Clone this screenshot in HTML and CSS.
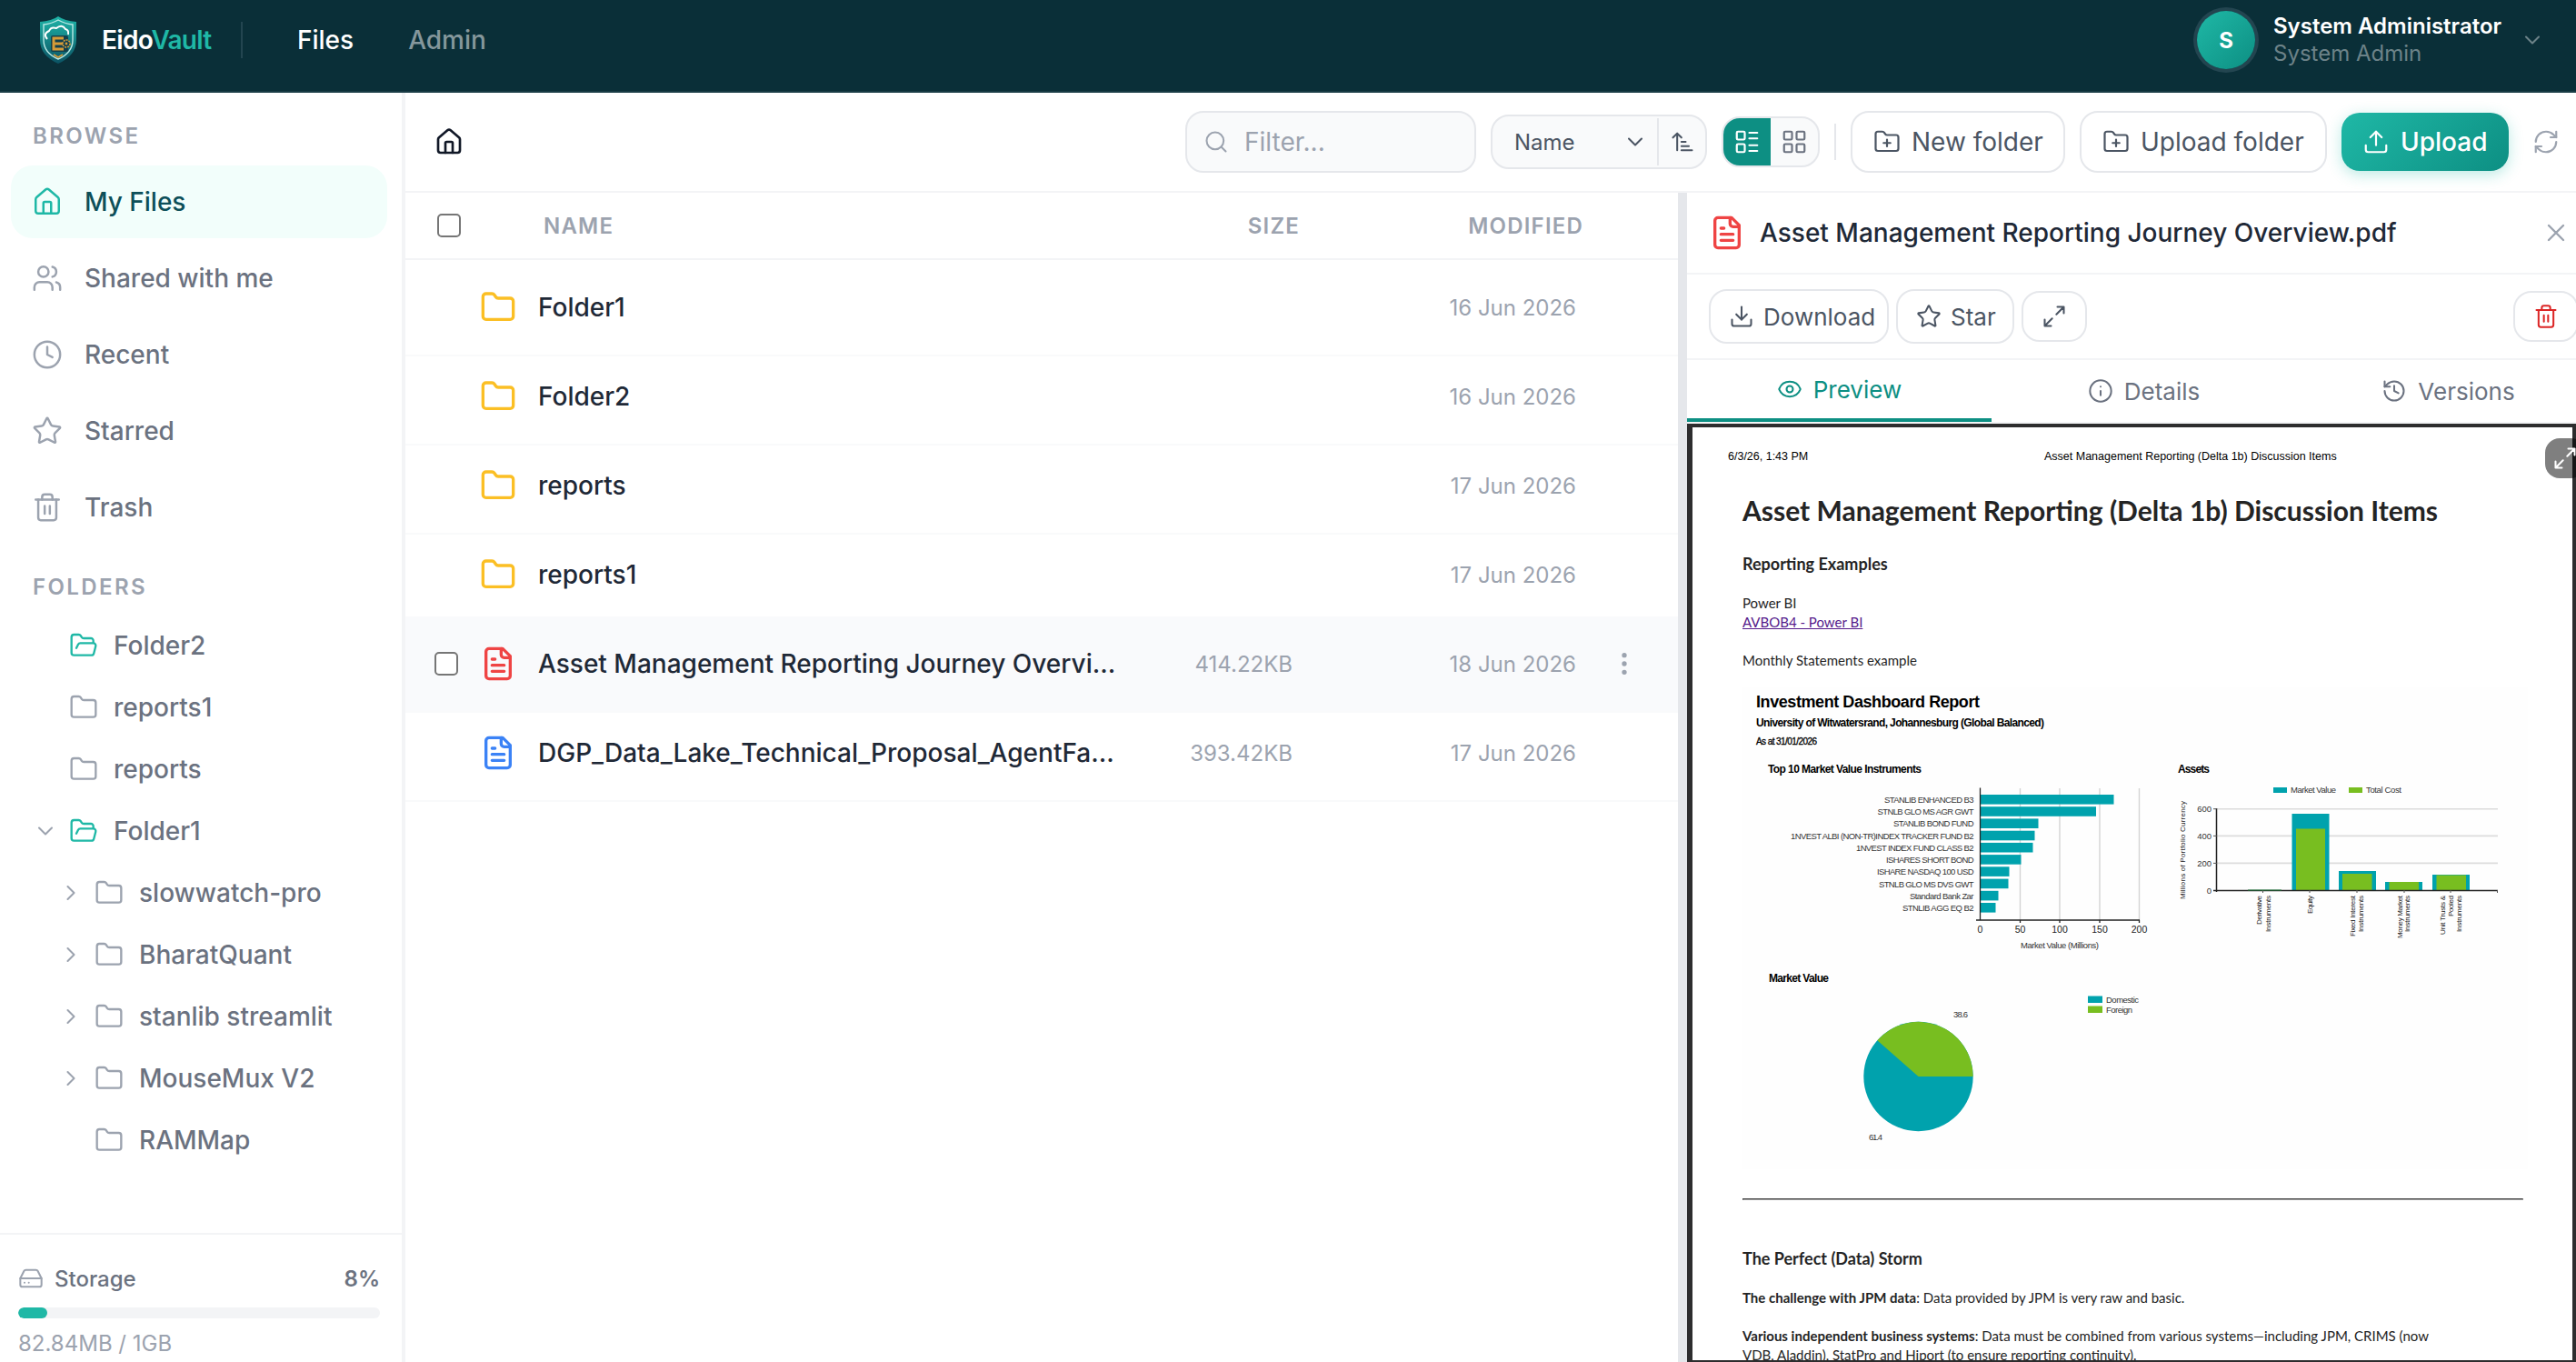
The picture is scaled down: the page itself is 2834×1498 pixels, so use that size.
FILE: index.html
```
<!DOCTYPE html>
<html lang="en">
  <head>
    <meta charset="UTF-8" />
    <title>EidoVault</title>
    <link rel="stylesheet" href="styles.css">
  </head>

  <body>
    <!-- icon set -->
    <svg width="0" height="0" class="sprite">
      <symbol id="i-home" viewBox="0 0 24 24"><path d="M15 21v-8a1 1 0 0 0-1-1h-4a1 1 0 0 0-1 1v8"/><path d="M3 10a2 2 0 0 1 .709-1.528l7-5.999a2 2 0 0 1 2.582 0l7 5.999A2 2 0 0 1 21 10v9a2 2 0 0 1-2 2H5a2 2 0 0 1-2-2z"/></symbol>
      <symbol id="i-users" viewBox="0 0 24 24"><path d="M16 21v-2a4 4 0 0 0-4-4H6a4 4 0 0 0-4 4v2"/><circle cx="9" cy="7" r="4"/><path d="M22 21v-2a4 4 0 0 0-3-3.87"/><path d="M16 3.13a4 4 0 0 1 0 7.75"/></symbol>
      <symbol id="i-clock" viewBox="0 0 24 24"><circle cx="12" cy="12" r="10"/><path d="M12 6v6l4 2"/></symbol>
      <symbol id="i-star" viewBox="0 0 24 24"><path d="M11.525 2.295a.53.53 0 0 1 .95 0l2.31 4.679a2.123 2.123 0 0 0 1.595 1.16l5.166.756a.53.53 0 0 1 .294.904l-3.736 3.638a2.123 2.123 0 0 0-.611 1.878l.882 5.14a.53.53 0 0 1-.771.56l-4.618-2.428a2.122 2.122 0 0 0-1.973 0L6.396 21.01a.53.53 0 0 1-.77-.56l.881-5.139a2.122 2.122 0 0 0-.611-1.879L2.16 9.795a.53.53 0 0 1 .294-.906l5.165-.755a2.122 2.122 0 0 0 1.597-1.16z"/></symbol>
      <symbol id="i-trash" viewBox="0 0 24 24"><path d="M3 6h18"/><path d="M19 6v14a2 2 0 0 1-2 2H7a2 2 0 0 1-2-2V6"/><path d="M8 6V4a2 2 0 0 1 2-2h4a2 2 0 0 1 2 2v2"/><path d="M10 11v6M14 11v6"/></symbol>
      <symbol id="i-folder" viewBox="0 0 24 24"><path d="M20 20a2 2 0 0 0 2-2V8a2 2 0 0 0-2-2h-7.9a2 2 0 0 1-1.69-.9L9.6 3.9A2 2 0 0 0 7.93 3H4a2 2 0 0 0-2 2v13a2 2 0 0 0 2 2Z"/></symbol>
      <symbol id="i-folder-open" viewBox="0 0 24 24"><path d="m6 14 1.5-2.9A2 2 0 0 1 9.24 10H20a2 2 0 0 1 1.94 2.5l-1.54 6a2 2 0 0 1-1.95 1.5H4a2 2 0 0 1-2-2V5a2 2 0 0 1 2-2h3.9a2 2 0 0 1 1.69.9l.81 1.2a2 2 0 0 0 1.67.9H18a2 2 0 0 1 2 2v2"/></symbol>
      <symbol id="i-folder-plus" viewBox="0 0 24 24"><path d="M12 10v6M9 13h6"/><path d="M20 20a2 2 0 0 0 2-2V8a2 2 0 0 0-2-2h-7.9a2 2 0 0 1-1.69-.9L9.6 3.9A2 2 0 0 0 7.93 3H4a2 2 0 0 0-2 2v13a2 2 0 0 0 2 2Z"/></symbol>
      <symbol id="i-down" viewBox="0 0 24 24"><path d="m6 9 6 6 6-6"/></symbol>
      <symbol id="i-right" viewBox="0 0 24 24"><path d="m9 18 6-6-6-6"/></symbol>
      <symbol id="i-drive" viewBox="0 0 24 24"><path d="M22 12H2"/><path d="M5.45 5.11 2 12v6a2 2 0 0 0 2 2h16a2 2 0 0 0 2-2v-6l-3.45-6.89A2 2 0 0 0 16.76 4H7.24a2 2 0 0 0-1.79 1.11z"/><path d="M6 16h.01M10 16h.01"/></symbol>
      <symbol id="i-search" viewBox="0 0 24 24"><circle cx="11" cy="11" r="8"/><path d="m21 21-4.3-4.3"/></symbol>
      <symbol id="i-sort" viewBox="0 0 24 24"><path d="m3 8 4-4 4 4M7 4v16"/><path d="M11 12h4M11 16h7M11 20h10"/></symbol>
      <symbol id="i-list" viewBox="0 0 24 24"><rect x="3" y="3" width="7" height="7" rx="1"/><rect x="3" y="14" width="7" height="7" rx="1"/><path d="M14 4h7M14 9h7M14 15h7M14 20h7"/></symbol>
      <symbol id="i-grid" viewBox="0 0 24 24"><rect x="3" y="3" width="7" height="7" rx="1"/><rect x="14" y="3" width="7" height="7" rx="1"/><rect x="14" y="14" width="7" height="7" rx="1"/><rect x="3" y="14" width="7" height="7" rx="1"/></symbol>
      <symbol id="i-upload" viewBox="0 0 24 24"><path d="M21 15v4a2 2 0 0 1-2 2H5a2 2 0 0 1-2-2v-4"/><path d="m17 8-5-5-5 5"/><path d="M12 3v12"/></symbol>
      <symbol id="i-download" viewBox="0 0 24 24"><path d="M21 15v4a2 2 0 0 1-2 2H5a2 2 0 0 1-2-2v-4"/><path d="m7 10 5 5 5-5"/><path d="M12 15V3"/></symbol>
      <symbol id="i-refresh" viewBox="0 0 24 24"><path d="M3 12a9 9 0 0 1 9-9 9.75 9.75 0 0 1 6.74 2.74L21 8"/><path d="M21 3v5h-5"/><path d="M21 12a9 9 0 0 1-9 9 9.75 9.75 0 0 1-6.74-2.74L3 16"/><path d="M8 16H3v5"/></symbol>
      <symbol id="i-file" viewBox="0 0 24 24"><path d="M15 2H6a2 2 0 0 0-2 2v16a2 2 0 0 0 2 2h12a2 2 0 0 0 2-2V7Z"/><path d="M14 2v4a2 2 0 0 0 2 2h4"/><path d="M10 9H8M16 13H8M16 17H8"/></symbol>
      <symbol id="i-close" viewBox="0 0 24 24"><path d="M18 6 6 18M6 6l12 12"/></symbol>
      <symbol id="i-expand" viewBox="0 0 24 24"><path d="M15 3h6v6M9 21H3v-6M21 3l-7 7M3 21l7-7"/></symbol>
      <symbol id="i-eye" viewBox="0 0 24 24"><path d="M2.062 12.348a1 1 0 0 1 0-.696 10.75 10.75 0 0 1 19.876 0 1 1 0 0 1 0 .696 10.75 10.75 0 0 1-19.876 0"/><circle cx="12" cy="12" r="3"/></symbol>
      <symbol id="i-info" viewBox="0 0 24 24"><circle cx="12" cy="12" r="10"/><path d="M12 16v-4M12 8h.01"/></symbol>
      <symbol id="i-history" viewBox="0 0 24 24"><path d="M3 12a9 9 0 1 0 9-9 9.75 9.75 0 0 0-6.74 2.74L3 8"/><path d="M3 3v5h5"/><path d="M12 7v5l4 2"/></symbol>
      <symbol id="i-more" viewBox="0 0 24 24"><circle cx="12" cy="12" r="1"/><circle cx="12" cy="5" r="1"/><circle cx="12" cy="19" r="1"/></symbol>
    </svg>

    <header class="header">
      <svg class="logo" viewBox="0 0 42 52">
        <defs>
          <linearGradient id="shield" x1="0" y1="0" x2="0" y2="1"><stop offset="0" stop-color="#1fb5a8"/><stop offset="1" stop-color="#0b5263"/></linearGradient>
        </defs>
        <path d="M21 0 Q28 5 41 6 V26 Q41 43 21 52 Q1 43 1 26 V6 Q14 5 21 0Z" fill="url(#shield)"/>
        <path d="M21 4 Q28 8 37 9 V26 Q37 40 21 47 Q5 40 5 26 V9 Q14 8 21 4Z" fill="none" stroke="#b9e8e4" stroke-width="1.4"/>
        <path d="M9 25 Q4 19 11 16 Q13 11 19 13 Q25 8 29 14 Q33 15 32 20" fill="none" stroke="#fff" stroke-width="2"/>
        <rect x="13" y="21" width="19" height="18" rx="2" fill="#123f4d"/>
        <path d="M27 24H16v12h11M16 30h10" fill="none" stroke="#d59b38" stroke-width="3"/>
        <circle cx="30" cy="30" r="4" fill="#123f4d" stroke="#d59b38" stroke-width="1.6" stroke-dasharray="2 1"/>
        <circle cx="30" cy="30" r="1.4" fill="#d59b38"/>
        <path d="M16 42l5 3 5-3" fill="none" stroke="#d59b38" stroke-width="1.6"/>
      </svg>
      <div class="brand">Eido<span>Vault</span></div>
      <nav class="nav">
        <a class="nav-link active">Files</a>
        <a class="nav-link">Admin</a>
      </nav>
      <div class="user">
        <div class="avatar">S</div>
        <div class="user-text">
          <div class="user-name">System Administrator</div>
          <div class="user-role">System Admin</div>
        </div>
        <svg class="icon s28"><use href="#i-down"/></svg>
      </div>
    </header>

    <div class="layout">
      <aside class="sidebar">
        <div class="side-title">BROWSE</div>
        <ul class="menu">
          <li class="active"><svg class="icon"><use href="#i-home"/></svg>My Files</li>
          <li><svg class="icon"><use href="#i-users"/></svg>Shared with me</li>
          <li><svg class="icon"><use href="#i-clock"/></svg>Recent</li>
          <li><svg class="icon"><use href="#i-star"/></svg>Starred</li>
          <li><svg class="icon"><use href="#i-trash"/></svg>Trash</li>
        </ul>
        <div class="side-title folders-title">FOLDERS</div>
        <ul class="tree">
          <li><span class="arrow"></span><svg class="icon open"><use href="#i-folder-open"/></svg>Folder2</li>
          <li><span class="arrow"></span><svg class="icon"><use href="#i-folder"/></svg>reports1</li>
          <li><span class="arrow"></span><svg class="icon"><use href="#i-folder"/></svg>reports</li>
          <li><svg class="arrow icon"><use href="#i-down"/></svg><svg class="icon open"><use href="#i-folder-open"/></svg>Folder1</li>
          <li class="child"><svg class="arrow icon"><use href="#i-right"/></svg><svg class="icon"><use href="#i-folder"/></svg>slowwatch-pro</li>
          <li class="child"><svg class="arrow icon"><use href="#i-right"/></svg><svg class="icon"><use href="#i-folder"/></svg>BharatQuant</li>
          <li class="child"><svg class="arrow icon"><use href="#i-right"/></svg><svg class="icon"><use href="#i-folder"/></svg>stanlib streamlit</li>
          <li class="child"><svg class="arrow icon"><use href="#i-right"/></svg><svg class="icon"><use href="#i-folder"/></svg>MouseMux V2</li>
          <li class="child"><span class="arrow"></span><svg class="icon"><use href="#i-folder"/></svg>RAMMap</li>
        </ul>
        <div class="storage">
          <div class="storage-top"><svg class="icon"><use href="#i-drive"/></svg><span>Storage</span><b>8%</b></div>
          <div class="bar"><div class="bar-fill" style="width: 8%"></div></div>
          <div class="storage-text">82.84MB / 1GB</div>
        </div>
      </aside>

      <main class="main">
        <div class="toolbar">
          <svg class="icon crumb"><use href="#i-home"/></svg>
          <div class="filter"><svg class="icon s28"><use href="#i-search"/></svg>Filter...</div>
          <div class="sort">
            <span class="sort-name">Name</span>
            <svg class="icon s28"><use href="#i-down"/></svg>
            <span class="sort-dir"><svg class="icon s28"><use href="#i-sort"/></svg></span>
          </div>
          <div class="view">
            <span class="on"><svg class="icon s30"><use href="#i-list"/></svg></span>
            <span><svg class="icon s30"><use href="#i-grid"/></svg></span>
          </div>
          <div class="sep"></div>
          <button class="btn new-folder"><svg class="icon s30"><use href="#i-folder-plus"/></svg><span>New folder</span></button>
          <button class="btn up-folder"><svg class="icon s30"><use href="#i-folder-plus"/></svg><span>Upload folder</span></button>
          <button class="btn primary"><svg class="icon s30"><use href="#i-upload"/></svg><span>Upload</span></button>
          <svg class="icon s30 refresh"><use href="#i-refresh"/></svg>
        </div>

        <div class="content">
          <section class="files">
            <div class="thead">
              <span class="check"></span>
              <span class="th-name">NAME</span>
              <span class="th-size">SIZE</span>
              <span class="th-date">MODIFIED</span>
            </div>
            <div class="row"><span class="pick"></span><svg class="icon folder"><use href="#i-folder"/></svg><span class="name">Folder1</span><span class="size"></span><span class="date">16 Jun 2026</span></div>
            <div class="row"><span class="pick"></span><svg class="icon folder"><use href="#i-folder"/></svg><span class="name">Folder2</span><span class="size"></span><span class="date">16 Jun 2026</span></div>
            <div class="row"><span class="pick"></span><svg class="icon folder"><use href="#i-folder"/></svg><span class="name">reports</span><span class="size"></span><span class="date">17 Jun 2026</span></div>
            <div class="row"><span class="pick"></span><svg class="icon folder"><use href="#i-folder"/></svg><span class="name">reports1</span><span class="size"></span><span class="date">17 Jun 2026</span></div>
            <div class="row hover"><span class="pick check"></span><svg class="icon pdf"><use href="#i-file"/></svg><span class="name">Asset Management Reporting Journey Overvi...</span><span class="size">414.22KB</span><span class="date">18 Jun 2026</span><svg class="icon s32 more"><use href="#i-more"/></svg></div>
            <div class="row"><span class="pick"></span><svg class="icon doc"><use href="#i-file"/></svg><span class="name">DGP_Data_Lake_Technical_Proposal_AgentFa...</span><span class="size">393.42KB</span><span class="date">17 Jun 2026</span></div>
          </section>

          <div class="splitter"></div>

          <section class="detail">
            <div class="detail-head">
              <svg class="icon pdf"><use href="#i-file"/></svg>
              <span class="detail-title">Asset Management Reporting Journey Overview.pdf</span>
              <svg class="icon s32 close"><use href="#i-close"/></svg>
            </div>
            <div class="actions">
              <button class="act download"><svg class="icon s28"><use href="#i-download"/></svg><span>Download</span></button>
              <button class="act star"><svg class="icon s28"><use href="#i-star"/></svg><span>Star</span></button>
              <button class="act square"><svg class="icon s28"><use href="#i-expand"/></svg></button>
              <button class="act square danger"><svg class="icon s28"><use href="#i-trash"/></svg></button>
            </div>
            <div class="tabs">
              <div class="tab active"><svg class="icon s28"><use href="#i-eye"/></svg><span>Preview</span></div>
              <div class="tab"><svg class="icon s28"><use href="#i-info"/></svg><span>Details</span></div>
              <div class="tab"><svg class="icon s28"><use href="#i-history"/></svg><span>Versions</span></div>
            </div>
            <div class="viewer">
              <div class="float-btn"><svg class="icon s28"><use href="#i-expand"/></svg></div>
              <div class="page">
                <div class="page-head"><span class="t1">6/3/26, 1:43 PM</span><span class="t2">Asset Management Reporting (Delta 1b) Discussion Items</span></div>
                <h1>Asset Management Reporting (Delta 1b) Discussion Items</h1>
                <h2>Reporting Examples</h2>
                <p class="p1">Power BI<br><a>AVBOB4 - Power BI</a></p>
                <p class="p2">Monthly Statements example</p>

                <!-- dashboard report -->
                <svg class="report" viewBox="1917 757 864 530" width="864" height="530">
                  <rect x="1917" y="757" width="864" height="530" fill="#fefefe"/>
                  <g class="bold">
                    <text x="1932" y="779" font-size="18" textLength="246">Investment Dashboard Report</text>
                    <text x="1932" y="800" font-size="12" textLength="317">University of Witwatersrand, Johannesburg (Global Balanced)</text>
                    <text x="1932" y="820" font-size="10" textLength="67" font-weight="400" stroke="#000" stroke-width=".3">As at 31/01/2026</text>
                    <text x="1945" y="851" font-size="12" textLength="169">Top 10 Market Value Instruments</text>
                    <text x="2396" y="851" font-size="12" textLength="35">Assets</text>
                    <text x="1946" y="1081" font-size="12" textLength="66">Market Value</text>
                  </g>

                  <!-- top 10 -->
                  <path d="M2222.5 868v145M2266 868v145M2310 868v145M2353.5 868v145" stroke="#d4d4d4" stroke-width="1.4"/>
                  <g fill="#00a2ad">
                    <rect x="2179" y="875" width="146.5" height="10.6"/>
                    <rect x="2179" y="888.2" width="127" height="10.6"/>
                    <rect x="2179" y="901.4" width="63.5" height="10.6"/>
                    <rect x="2179" y="914.7" width="59.5" height="10.6"/>
                    <rect x="2179" y="927.9" width="57.5" height="10.6"/>
                    <rect x="2179" y="941.1" width="44.5" height="10.6"/>
                    <rect x="2179" y="954.3" width="31.5" height="10.6"/>
                    <rect x="2179" y="967.6" width="30.5" height="10.6"/>
                    <rect x="2179" y="980.8" width="19.5" height="10.6"/>
                    <rect x="2179" y="994" width="16.5" height="10.6"/>
                  </g>
                  <path d="M2178.5 867.5v146M2174 1013H2354M2222.5 1013v3M2266 1013v3M2310 1013v3M2353.5 1013v3" stroke="#222" stroke-width="1.3" fill="none"/>
                  <g class="lbl">
                    <text x="2073" y="884" textLength="98.5">STANLIB ENHANCED B3</text>
                    <text x="2065.5" y="897" textLength="106">STNLB GLO MS AGR GWT</text>
                    <text x="2083" y="910" textLength="88.5">STANLIB BOND FUND</text>
                    <text x="1970" y="923.5" textLength="201.5">1NVEST ALBI (NON-TR)INDEX TRACKER FUND B2</text>
                    <text x="2042" y="936.5" textLength="129.5">1NVEST INDEX FUND CLASS B2</text>
                    <text x="2075" y="950" textLength="96.5">ISHARES SHORT BOND</text>
                    <text x="2065" y="963" textLength="106.5">ISHARE NASDAQ 100 USD</text>
                    <text x="2067" y="976.5" textLength="104.5">STNLB GLO MS DVS GWT</text>
                    <text x="2101" y="989.5" textLength="70.5">Standard Bank Zar</text>
                    <text x="2093" y="1002.5" textLength="78.5">STNLIB AGG EQ B2</text>
                    <text x="2223" y="1043.5" textLength="86">Market Value (Millions)</text>
                  </g>
                  <g class="num" text-anchor="middle">
                    <text x="2178.5" y="1027">0</text><text x="2222.5" y="1027">50</text><text x="2266" y="1027">100</text><text x="2310" y="1027">150</text><text x="2353.5" y="1027">200</text>
                  </g>

                  <!-- assets -->
                  <rect x="2501" y="867" width="15" height="6" fill="#00a2ad"/>
                  <rect x="2584" y="867" width="15" height="6" fill="#78be20"/>
                  <g class="lbl">
                    <text x="2520" y="873" textLength="50">Market Value</text>
                    <text x="2603" y="873" textLength="39">Total Cost</text>
                  </g>
                  <path d="M2438 890.7H2748M2438 920.4H2748M2438 950.4H2748" stroke="#dcdcdc" stroke-width="1.6"/>
                  <g fill="#00a2ad">
                    <rect x="2521.5" y="896" width="41" height="84"/>
                    <rect x="2573" y="959" width="41" height="21"/>
                    <rect x="2624" y="971" width="41" height="9"/>
                    <rect x="2676" y="963" width="41" height="17"/>
                  </g>
                  <g fill="#78be20">
                    <rect x="2526" y="912.5" width="32" height="67.5"/>
                    <rect x="2577" y="962" width="32.5" height="18"/>
                    <rect x="2628.5" y="971" width="32.5" height="9"/>
                    <rect x="2680.5" y="963.5" width="32.5" height="16.5"/>
                  </g>
                  <path d="M2438.5 890V982M2435 980.5H2748" stroke="#222" stroke-width="1.5" fill="none"/>
                  <path d="M2435 890.7h4M2435 920.4h4M2435 950.4h4M2489.5 980v3M2541 980v3M2593 980v3M2645 980v3M2696 980v3M2747.5 980v3" stroke="#555"/>
                  <path d="M2473 980h37" stroke="#1e7a3a"/>
                  <g class="lbl" text-anchor="end">
                    <text x="2433" y="894">600</text><text x="2433" y="923.5">400</text><text x="2433" y="953.5">200</text><text x="2433" y="983.5">0</text>
                  </g>
                  <g class="rot" text-anchor="end">
                    <text transform="translate(2404 882) rotate(-90)" textLength="108">Millions of Portfolio Currency</text>
                    <text transform="translate(2488 986) rotate(-90)" textLength="32">Derivative</text>
                    <text transform="translate(2498 986) rotate(-90)" textLength="40">Instruments</text>
                    <text transform="translate(2543.5 986) rotate(-90)" textLength="20">Equity</text>
                    <text transform="translate(2591 986) rotate(-90)" textLength="45">Fixed Interest</text>
                    <text transform="translate(2600 986) rotate(-90)" textLength="40">Instruments</text>
                    <text transform="translate(2642.5 986) rotate(-90)" textLength="47">Money Market</text>
                    <text transform="translate(2651 986) rotate(-90)" textLength="40">Instruments</text>
                    <text transform="translate(2690 986) rotate(-90)" textLength="43">Unit Trusts &amp;</text>
                    <text transform="translate(2699 986) rotate(-90)" textLength="23">Pooled</text>
                    <text transform="translate(2707.5 986) rotate(-90)" textLength="40">Instruments</text>
                  </g>

                  <!-- market value pie -->
                  <circle cx="2110.5" cy="1185" r="60.2" fill="#00a2ad"/>
                  <path d="M2110.5 1185H2170.7A60.2 60.2 0 0 0 2065.3 1145.3Z" fill="#78be20"/>
                  <rect x="2297" y="1096.5" width="16" height="7.5" fill="#00a2ad"/>
                  <rect x="2297" y="1107.5" width="16" height="7.5" fill="#78be20"/>
                  <g class="lbl">
                    <text x="2317" y="1103.5" textLength="36">Domestic</text>
                    <text x="2317" y="1114.5" textLength="29">Foreign</text>
                    <text x="2149" y="1120" textLength="16">38.6</text>
                    <text x="2056" y="1255" textLength="15">61.4</text>
                  </g>
                </svg>

                <hr>
                <h2 class="storm">The Perfect (Data) Storm</h2>
                <p class="p3"><span class="l1"><b>The challenge with JPM data</b>: Data provided by JPM is very raw and basic.</span></p>
                <p class="p4"><span class="l2"><b>Various independent business systems</b>: Data must be combined from various systems—including JPM, CRIMS (now</span><br><span class="l3">VDB, Aladdin), StatPro and Hiport (to ensure reporting continuity).</span></p>
              </div>
            </div>
          </section>
        </div>
      </main>
    </div>
  </body>
</html>
```
FILE: styles.css
```
* {
    box-sizing: border-box;
    margin: 0;
    padding: 0;
}
body {
    width: 2834px;
    height: 1498px;
    overflow: hidden;
    font-family: Inter, "Liberation Sans", sans-serif;
    font-size: 28px;
    background-color: #fff;
    color: #1f2937;
}
ul {
    list-style: none;
}
.sprite {
    display: block;
}
.icon {
    width: 34px;
    height: 34px;
    flex: none;
    fill: none;
    stroke: currentColor;
    stroke-width: 1.75;
    stroke-linecap: round;
    stroke-linejoin: round;
}
.s28 { width: 28px; height: 28px; }
.s30 { width: 30px; height: 30px; }
.s32 { width: 32px; height: 32px; }

/* header */
.header {
    height: 102px;
    padding: 0 34px 12px 43px;
    border-bottom: 2px solid #193c45;
    background-color: #0a2f38;
    display: flex;
    align-items: center;
    color: #fff;
}
.logo {
    width: 42px;
    height: 52px;
}
.brand {
    margin-left: 27px;
    width: 153px;
    font-weight: 600;
    letter-spacing: -0.7px;
}
.brand span {
    color: #1fb8a6;
}
.nav {
    border-left: 2px solid #234550;
    height: 40px;
    padding-left: 60px;
    display: flex;
    align-items: center;
    gap: 60px;
}
.nav-link {
    font-weight: 500;
    color: #85979c;
}
.nav-link.active {
    color: #fff;
}
.user {
    margin-left: auto;
    display: flex;
    align-items: center;
    color: #6c8288;
}
.avatar {
    width: 64px;
    height: 64px;
    border-radius: 50%;
    background: linear-gradient(135deg, #1fb8a6, #0d8f83);
    box-shadow: 0 0 0 4px #234550;
    color: #fff;
    font-size: 24px;
    font-weight: 700;
    display: flex;
    align-items: center;
    justify-content: center;
    margin-right: 20px;
}
.user-text {
    width: 271px;
    font-size: 24px;
    line-height: 30px;
}
.user-name {
    color: #fff;
    font-weight: 600;
}

/* sidebar */
.layout {
    display: flex;
    height: 1396px;
}
.sidebar {
    width: 446px;
    border-right: 4px solid #f3f4f6;
    display: flex;
    flex-direction: column;
    color: #6b7280;
    font-weight: 500;
}
.side-title {
    padding: 32px 0 0 36px;
    height: 80px;
    font-size: 24px;
    line-height: 32px;
    font-weight: 600;
    letter-spacing: 2.4px;
    color: #9ca3af;
}
.menu {
    padding: 0 16px 0 12px;
    display: flex;
    flex-direction: column;
    gap: 4px;
}
.menu li {
    height: 80px;
    padding-left: 23px;
    border-radius: 24px;
    display: flex;
    align-items: center;
    gap: 24px;
}
.menu .icon {
    color: #9ca3af;
}
.menu .active {
    background-color: #f2fefb;
    color: #0d4f59;
}
.menu .active .icon {
    color: #1fb8a6;
}
.folders-title {
    height: 78px;
}
.tree li {
    height: 68px;
    padding-left: 36px;
    display: flex;
    align-items: center;
}
.tree .child {
    padding-left: 64px;
}
.tree .icon {
    width: 32px;
    height: 32px;
    margin-right: 17px;
    color: #9ca3af;
}
.tree .arrow {
    width: 28px;
    height: 28px;
    margin-right: 12px;
}
.tree .open {
    color: #1fb8a6;
}
.storage {
    margin-top: auto;
    height: 142px;
    border-top: 2px solid #f3f4f6;
    padding: 32px 24px 0 20px;
    font-size: 24px;
}
.storage-top {
    display: flex;
    align-items: center;
    height: 32px;
}
.storage-top .icon {
    width: 28px;
    height: 28px;
    color: #9ca3af;
    margin-right: 12px;
}
.storage-top b {
    margin-left: auto;
    font-weight: 600;
}
.bar {
    margin-top: 16px;
    height: 12px;
    border-radius: 6px;
    background-color: #f3f4f6;
    overflow: hidden;
}
.bar-fill {
    height: 12px;
    border-radius: 6px;
    background-color: #1fb8a6;
}
.storage-text {
    margin-top: 12px;
    line-height: 32px;
    font-weight: 400;
    color: #9ca3af;
}

/* toolbar */
.main {
    width: 2388px;
    flex: none;
}
.toolbar {
    height: 110px;
    border-bottom: 2px solid #f3f4f6;
    display: flex;
    align-items: center;
    padding-left: 32px;
    color: #4b5563;
}
.crumb {
    width: 32px;
    height: 32px;
    stroke-width: 2;
    color: #111827;
    margin-right: 794px;
}
.filter {
    width: 320px;
    height: 68px;
    border: 2px solid #e5e7eb;
    border-radius: 20px;
    background-color: #f9fafb;
    color: #9ca3af;
    display: flex;
    align-items: center;
    gap: 17px;
    padding-left: 18px;
    margin-right: 16px;
}
.sort {
    width: 238px;
    height: 60px;
    border: 2px solid #e5e7eb;
    border-radius: 20px;
    background-color: #f9fafb;
    display: flex;
    align-items: center;
    padding-left: 24px;
    font-size: 24px;
    margin-right: 16px;
}
.sort-name {
    width: 119px;
}
.sort-dir {
    margin-left: 10px;
    height: 52px;
    border-left: 2px solid #e5e7eb;
    display: flex;
    align-items: center;
    padding-left: 12px;
}
.view {
    width: 108px;
    height: 56px;
    border: 2px solid #e5e7eb;
    border-radius: 20px;
    background-color: #f9fafb;
    overflow: hidden;
    display: flex;
    color: #6b7280;
    margin-right: 16px;
}
.view span {
    width: 52px;
    display: flex;
    align-items: center;
    justify-content: center;
}
.view .on {
    background-color: #0d8f83;
    color: #fff;
}
.sep {
    width: 2px;
    height: 40px;
    background-color: #e5e7eb;
    margin-right: 16px;
}
.btn {
    height: 68px;
    border: 2px solid #e5e7eb;
    border-radius: 20px;
    background-color: #fff;
    font: inherit;
    color: #4b5563;
    display: flex;
    align-items: center;
    gap: 12px;
    padding-left: 23px;
    margin-right: 16px;
    white-space: nowrap;
}
.new-folder { width: 236px; }
.up-folder { width: 272px; }
.primary {
    width: 184px;
    height: 64px;
    border: none;
    color: #fff;
    font-weight: 500;
    background: linear-gradient(135deg, #1fb8a6, #0d8f83);
    box-shadow: 0 4px 16px rgba(31, 184, 166, 0.3);
}
.refresh {
    color: #9ca3af;
    margin-left: 10px;
}

/* file list */
.content {
    display: flex;
    height: 1286px;
}
.files {
    width: 1400px;
    flex: none;
}
.thead {
    height: 74px;
    border-bottom: 2px solid #f3f4f6;
    display: flex;
    align-items: center;
    padding-left: 35px;
    font-size: 24px;
    font-weight: 600;
    letter-spacing: 1.2px;
    color: #9ca3af;
}
.check {
    width: 26px;
    height: 26px;
    border: 2px solid #767676;
    border-radius: 5px;
    background-color: #fff;
}
.th-name {
    margin-left: 91px;
    width: 550px;
}
.th-size {
    width: 282px;
    text-align: right;
}
.th-date {
    width: 312px;
    text-align: right;
}
/* rows overlap a bit so the hover background reaches the row above */
.row {
    position: relative;
    height: 106px;
    margin-bottom: -8px;
    border-bottom: 2px solid #f9fafb;
    display: flex;
    align-items: center;
    padding-left: 32px;
}
.row.hover {
    background-color: #f9fafc;
}
.pick {
    width: 26px;
    height: 26px;
    margin-right: 24px;
}
.row .icon {
    width: 40px;
    height: 40px;
    stroke-width: 2;
}
.row .more {
    width: 32px;
    height: 32px;
    margin-left: 37px;
    color: #9ca3af;
}
.folder { color: #fbbf24; }
.pdf { color: #ef4444; }
.doc { color: #3b82f6; }
.name {
    margin-left: 24px;
    width: 640px;
    font-weight: 500;
    white-space: nowrap;
}
.size, .date {
    font-size: 24px;
    color: #9ca3af;
    text-align: right;
}
.size { width: 190px; }
.date { width: 312px; }
.splitter {
    width: 10px;
    flex: none;
    background-color: #e5e7eb;
}

/* detail panel */
.detail {
    width: 1005px;
    flex: none;
    display: flex;
    flex-direction: column;
}
.detail-head {
    height: 90px;
    border-bottom: 2px solid #f3f4f6;
    display: flex;
    align-items: center;
    padding-left: 24px;
}
.detail-head .pdf {
    width: 40px;
    height: 40px;
    stroke-width: 2;
}
.detail-title {
    margin-left: 16px;
    width: 860px;
    font-weight: 500;
    white-space: nowrap;
}
.close {
    color: #9ca3af;
}
.actions {
    height: 94px;
    border-bottom: 2px solid #f3f4f6;
    display: flex;
    align-items: center;
    gap: 8px;
    padding: 0 24px;
}
.act {
    height: 60px;
    border: 2px solid #e5e7eb;
    border-radius: 20px;
    background-color: #fff;
    font: inherit;
    font-size: 26px;
    color: #4b5563;
    display: flex;
    align-items: center;
    gap: 10px;
    padding-left: 20px;
}
.download { width: 198px; }
.act.star { width: 130px; }
.act.square {
    width: 72px;
    height: 56px;
    justify-content: center;
    padding: 0;
}
.act.danger {
    margin-left: auto;
    color: #dc2626;
}
.tabs {
    height: 70px;
    border-bottom: 2px solid #f3f4f6;
    display: flex;
}
.tab {
    flex: 1;
    display: flex;
    align-items: center;
    justify-content: center;
    gap: 12px;
    font-size: 26px;
    color: #6b7280;
}
.tab.active {
    color: #0d8f83;
    border-bottom: 4px solid #0d8f83;
}

/* pdf viewer */
.viewer {
    position: relative;
    width: 978px;
    height: 1032px;
    padding: 4px 4px 2px 6px;
    background-color: #2d2d2e;
}
.float-btn {
    position: absolute;
    left: 944px;
    top: 16px;
    width: 44px;
    height: 44px;
    border-radius: 16px;
    background-color: rgba(0, 0, 0, 0.5);
    color: #fff;
    display: flex;
    align-items: center;
    justify-content: center;
}
.page {
    height: 1026px;
    overflow: hidden;
    background-color: #fff;
    padding: 22px 0 0 55px;
    font-family: Lato, "Liberation Sans", sans-serif;
    font-size: 15px;
    line-height: 21px;
    color: #242424;
}
.page-head {
    font: 12.5px/20px "Liberation Sans", sans-serif;
    color: #000;
    margin-left: -16px;
    display: flex;
}
.t1 { width: 348px; }
.page h1 {
    margin-top: 26px;
    font-size: 30px;
    line-height: 46px;
    white-space: nowrap;
}
.page h2 {
    margin-top: 24px;
    font-size: 18px;
    line-height: 24px;
}
.p1 { margin-top: 21px; }
.p2 { margin-top: 21px; }
.page a {
    color: #551a8b;
    text-decoration: underline;
}
.report {
    display: block;
    margin-top: 19px;
    font-family: "Liberation Sans", sans-serif;
}
.report .bold { font-weight: 700; fill: #000; }
.report .lbl { font-size: 9.5px; fill: #333; }
.report .num { font-size: 10.5px; fill: #222; }
.report .rot { font-size: 8px; fill: #222; }
.page hr {
    margin-top: 32px;
    width: 859px;
    border: 1px inset #9a9a9a;
}
.page .storm { margin-top: 52px; }
.p3 { margin-top: 21px; }
.p4 { margin-top: 21px; }
.p3, .p4 { white-space: nowrap; }
```
